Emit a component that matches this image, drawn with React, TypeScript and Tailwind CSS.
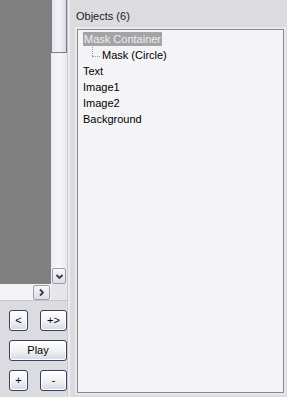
import { ReactNode } from "react";

const font = { fontFamily: '"Liberation Sans", Arial, sans-serif' };

function XpButton({ children, className }: { children: ReactNode; className: string }) {
    return (
        <button
            className={`h-[21px] rounded-[3px] border border-[#2f4466] bg-gradient-to-b from-white via-[#f3f3f6] to-[#d5d7e2] text-[11px] leading-none text-black shadow-[inset_0_0_0_1px_#ffffff] flex items-center justify-center ${className}`}
        >
            {children}
        </button>
    );
}

function Chevron({ dir }: { dir: "down" | "right" }) {
    return (
        <svg width="9" height="9" viewBox="0 0 9 9" className={dir === "right" ? "-rotate-90" : ""}>
            <path d="M1.5 3 L4.5 6 L7.5 3" fill="none" stroke="#3a3a46" strokeWidth="1.8" />
        </svg>
    );
}

const objects = ["Text", "Image1", "Image2", "Background"];

export default function App() {
    return (
        <div className="w-[287px] h-[397px] bg-[#dcdce0] flex text-[11px] text-black select-none overflow-hidden" style={font}>
            {/* Left: stage preview + playback controls */}
            <div className="w-[67px] flex flex-col flex-shrink-0">
                <div className="flex h-[284px]">
                    <div className="w-[51px] bg-[#808080]" />
                    <div className="w-[16px] flex flex-col bg-gradient-to-r from-[#ececf0] via-[#f8f8fa] to-[#e9e9ee]">
                        {/* Thumb */}
                        <div className="h-[53px] border border-t-0 border-[#7c7c88] bg-gradient-to-r from-[#e4e5ee] via-[#f4f4f8] to-[#d8d9e6]" />
                        <div className="flex-1" />
                        <div className="mx-[1px] h-[16px] border border-[#9d9dab] rounded-[2px] bg-gradient-to-b from-[#f8f8fb] to-[#dcdde6] flex items-center justify-center">
                            <Chevron dir="down" />
                        </div>
                    </div>
                </div>
                <div className="flex h-[17px] border-b border-[#c4c4cc]">
                    <div className="w-[51px] bg-[#f3f3f6] flex justify-end items-end pr-[1px]">
                        <div className="w-[17px] h-[15px] border border-[#9d9dab] rounded-[2px] bg-gradient-to-b from-[#f8f8fb] to-[#dcdde6] flex items-center justify-center">
                            <Chevron dir="right" />
                        </div>
                    </div>
                    <div className="w-[16px] bg-[#e6e6ea]" />
                </div>
                <div className="flex flex-col gap-[9px] pl-[9px] pt-[9px]">
                    <div className="flex gap-[12px]">
                        <XpButton className="w-[19px]">&lt;</XpButton>
                        <XpButton className="w-[27px]">+&gt;</XpButton>
                    </div>
                    <XpButton className="w-[58px]">Play</XpButton>
                    <div className="flex gap-[12px]">
                        <XpButton className="w-[19px]">+</XpButton>
                        <XpButton className="w-[27px]">-</XpButton>
                    </div>
                </div>
            </div>

            {/* Splitter */}
            <div className="w-[3px] flex-shrink-0 border-l border-[#c8c8ce] bg-[#ececef]" />

            {/* Right: object list */}
            <div className="flex-1 flex flex-col pl-[5px] pr-[3px] pb-[4px]">
                <div className="h-[26px] pt-[10px] pl-[1px] leading-[13px] text-[#1a1a1a]">Objects (6)</div>
                <div className="flex-1 ml-[2px] mt-[3px] border border-[#8a8a94] bg-[#f4f4f6] shadow-[0_0_0_2px_#e9e9ed] pt-[1px] pl-[5px]">
                    <div className="h-[16px] flex items-center">
                        <span className="h-[14px] px-[1px] bg-[#a4a4a6] text-[#ededf0] leading-[14px]">Mask Container</span>
                    </div>
                    <div className="h-[16px] flex items-center relative">
                        <div className="absolute left-[9px] top-0 h-[9px] border-l border-dotted border-[#9a9aa0]" />
                        <div className="absolute left-[9px] top-[9px] w-[8px] border-t border-dotted border-[#9a9aa0]" />
                        <span className="pl-[19px] leading-[14px]">Mask (Circle)</span>
                    </div>
                    {objects.map((name) => (
                        <div key={name} className="h-[16px] flex items-center">
                            <span className="leading-[14px]">{name}</span>
                        </div>
                    ))}
                </div>
            </div>
        </div>
    );
}
